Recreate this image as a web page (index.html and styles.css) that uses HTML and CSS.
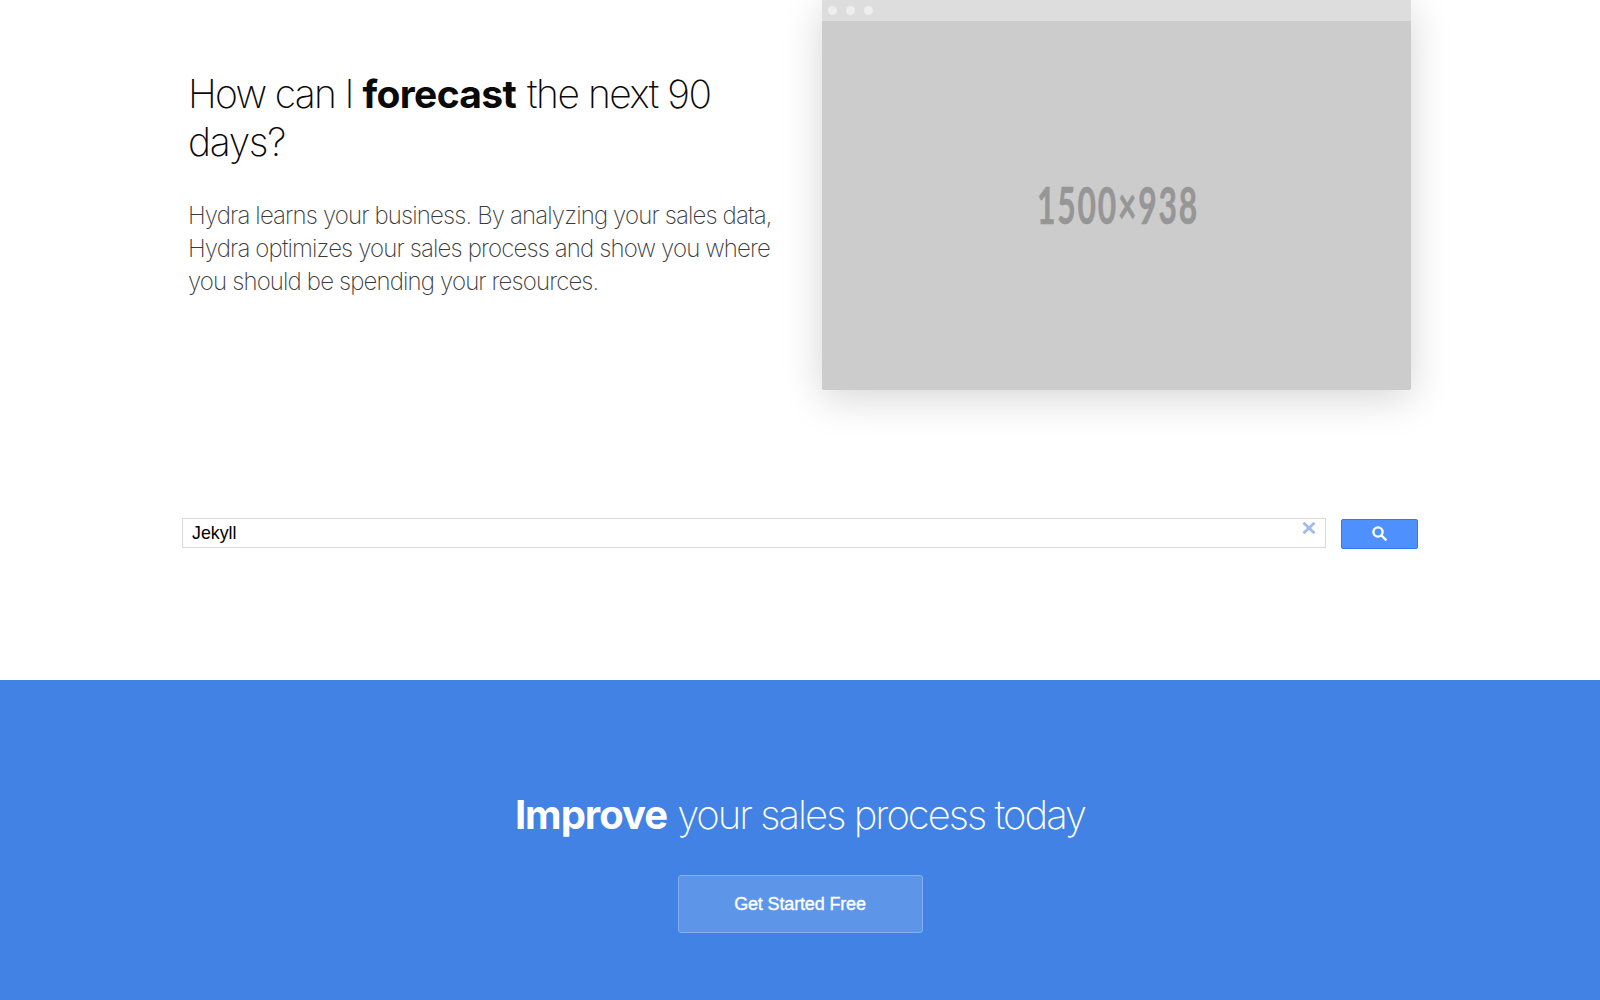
FILE: index.html
```html
<!DOCTYPE html>
<html lang="en">
<head>
<meta charset="utf-8">
<title>Hydra</title>
<link rel="stylesheet" href="styles.css">
</head>
<body>
<main class="content">
  <section class="feature">
    <div class="feature-text">
      <h2 class="title"><span class="t-a">How can I</span> <b class="t-b">forecast</b> <span class="t-c">the next 90</span><br><span class="t-d">days?</span></h2>
      <p class="lead">Hydra learns your business. By analyzing your sales data,<br>Hydra optimizes your sales process and show you where<br>you should be spending your resources.</p>
    </div>
    <div class="window">
      <div class="window-bar"><i class="dot"></i><i class="dot"></i><i class="dot"></i></div>
      <svg class="placeholder" viewBox="0 0 589 369"><text x="215" y="203" textLength="162" lengthAdjust="spacingAndGlyphs">1500×938</text></svg>
    </div>
  </section>
  <form class="search">
    <div class="field"><span class="query">Jekyll</span>
      <svg class="clear" viewBox="0 0 14 12"><path d="M1.5 .8 12.5 11.2M12.5 .8 1.5 11.2"/></svg>
    </div>
    <div class="search-button"><svg class="glass" viewBox="0 0 16 16"><circle cx="6" cy="6" r="4.6"/><path d="M9.5 9.5 14.4 14.4"/></svg></div>
  </form>
</main>
<section class="cta">
  <h2 class="cta-title"><b class="c-a">Improve</b> <span class="c-b">your sales process today</span></h2>
  <a class="cta-button">Get Started Free</a>
</section>
</body>
</html>
```
FILE: styles.css
```css
* { box-sizing: border-box; }
body { margin: 0; height: 1000px; overflow: hidden; background: #fff; color: #0a0a0a; font-family: Inter, "Liberation Sans", sans-serif; }
.content { height: 680px; padding: 0 182px; overflow: hidden; }
.feature { display: flex; justify-content: space-between; height: 390px; padding: 0 7px 0 6px; }
.feature-text { width: 600px; padding-top: 70px; white-space: nowrap; }
.title { margin: 0; font-size: 39px; line-height: 48px; font-weight: 200; letter-spacing: -1.2px; }
.title b, .cta-title b { font-weight: 700; }
.t-a { letter-spacing: -1.7px; }
.t-b { letter-spacing: -.65px; margin-right: 1px; }
.t-c { letter-spacing: -1.45px; }
.t-d { letter-spacing: -1.3px; }
.lead { margin: 33px 0 0; font-size: 24px; line-height: 33.2px; font-weight: 200; letter-spacing: -.86px; color: #3a3a3a; }
.window { width: 589px; height: 390px; border-radius: 0 0 2px 2px; background: #ccc; box-shadow: 0 8px 40px rgba(0,0,0,.17); }
.window-bar { display: flex; align-items: center; gap: 9px; height: 21px; padding: 0 0 1px 6px; background: #ddd; }
.dot { width: 9px; height: 9px; border-radius: 50%; background: #eee; }
.placeholder { display: block; width: 589px; height: 369px; }
.placeholder text { font: 700 52px Lato, sans-serif; letter-spacing: 3px; fill: #969696; stroke: #969696; stroke-width: .6px; }
.search { display: flex; gap: 15px; margin-top: 128px; }
.field { display: flex; justify-content: space-between; width: 1144px; height: 30px; padding: 0 9px; border: 1px solid #d9d9d9; }
.query { font: 17.8px/28px "Liberation Sans", sans-serif; color: #000; }
.clear { width: 14px; height: 12px; margin-top: 3px; fill: none; stroke: #a1b9ed; stroke-width: 2.8; }
.search-button { display: flex; justify-content: center; align-items: center; width: 77px; height: 30px; margin-top: 1px; border: 1px solid #2f7bee; border-radius: 2px; background: #4d90fe; }
.glass { width: 16px; height: 16px; fill: none; stroke: #fff; stroke-width: 2.4; }
.cta { display: flex; flex-direction: column; align-items: center; height: 320px; padding-top: 111px; background: #4182e4; color: #fff; }
.cta-title { margin: 0; font-size: 40px; line-height: 48px; font-weight: 200; letter-spacing: -1.2px; white-space: nowrap; }
.c-a { letter-spacing: -1px; }
.c-b { letter-spacing: -1.97px; }
.cta-button { display: flex; align-items: center; justify-content: center; width: 245px; height: 58px; padding-top: 1px; margin-top: 36px; border: 1px solid #86aff0; border-radius: 3px; background: #5d95e9; font: 500 18px "Liberation Sans", sans-serif; letter-spacing: -.15px; -webkit-text-stroke: .35px #fff; }
```
